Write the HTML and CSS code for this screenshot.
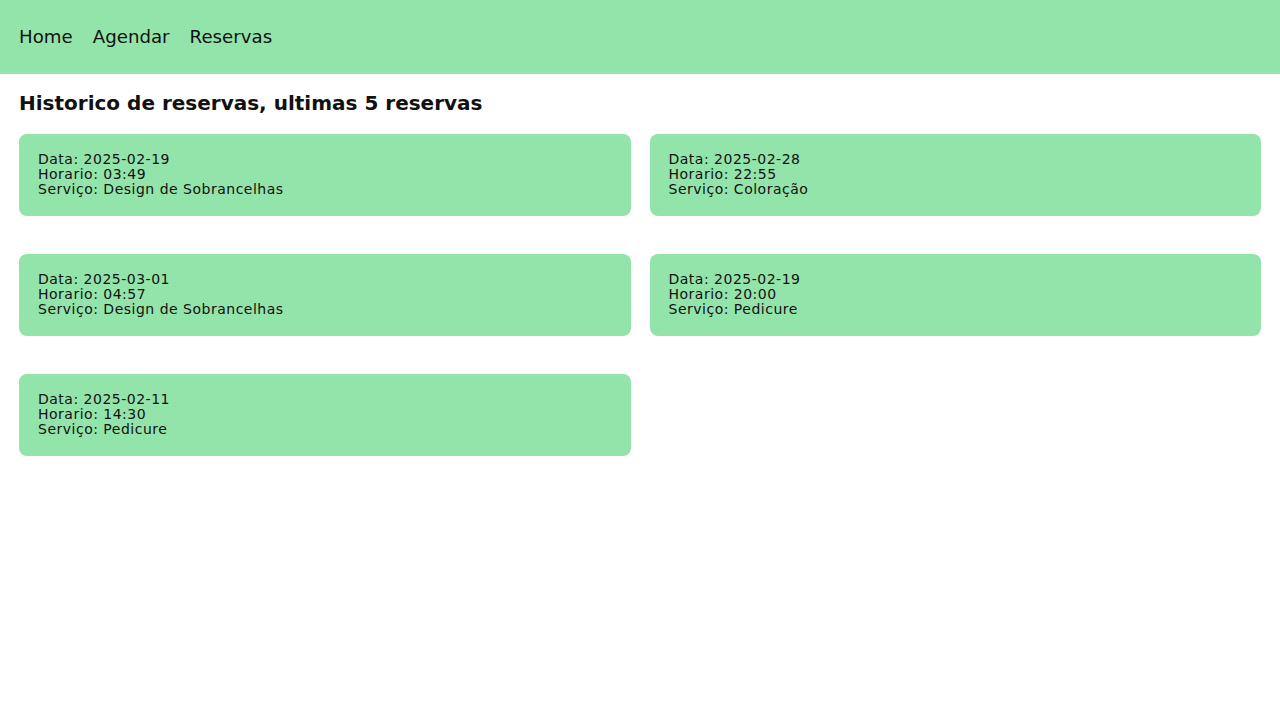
FILE: index.html
```html
<!DOCTYPE html>
<html lang="pt">
<head>
<meta charset="utf-8">
<title>Reservas</title>
<link rel="stylesheet" href="styles.css">
</head>
<body>
<header class="topbar">
  <nav class="nav">
    <a href="#">Home</a>
    <a href="#">Agendar</a>
    <a href="#">Reservas</a>
  </nav>
</header>
<main class="content">
  <h1 class="title">Historico de reservas, ultimas 5 reservas</h1>
  <div class="grid">
    <div class="card"><p>Data: 2025-02-19</p><p>Horario: 03:49</p><p>Serviço: Design de Sobrancelhas</p></div>
    <div class="card"><p>Data: 2025-02-28</p><p>Horario: 22:55</p><p>Serviço: Coloração</p></div>
    <div class="card"><p>Data: 2025-03-01</p><p>Horario: 04:57</p><p>Serviço: Design de Sobrancelhas</p></div>
    <div class="card"><p>Data: 2025-02-19</p><p>Horario: 20:00</p><p>Serviço: Pedicure</p></div>
    <div class="card"><p>Data: 2025-02-11</p><p>Horario: 14:30</p><p>Serviço: Pedicure</p></div>
  </div>
</main>
</body>
</html>
```
FILE: styles.css
```css
* { box-sizing: border-box; }
body {
  margin: 0;
  font-family: "DejaVu Sans", "Open Sans", sans-serif;
  color: #111;
  background: #fff;
}
.topbar {
  background: #93e4aa;
  height: 74px;
  display: flex;
  align-items: center;
  padding: 0 19px 2px;
}
.nav {
  display: flex;
  gap: 20px;
}
.nav a {
  color: #111;
  text-decoration: none;
  font-size: 18.2px;
}
.content {
  padding: 0 19px;
}
.title {
  margin: 16px 0 18px;
  font-size: 20px;
  font-weight: 600;
  line-height: 26px;
}
.grid {
  display: grid;
  grid-template-columns: 1fr 1fr;
  column-gap: 19px;
  row-gap: 38px;
}
.card {
  background: #93e4aa;
  border-radius: 8px;
  height: 82px;
  padding: 18px 19px;
}
.card p {
  margin: 0;
  font-size: 14px;
  letter-spacing: 0.5px;
  line-height: 15px;
}
```
